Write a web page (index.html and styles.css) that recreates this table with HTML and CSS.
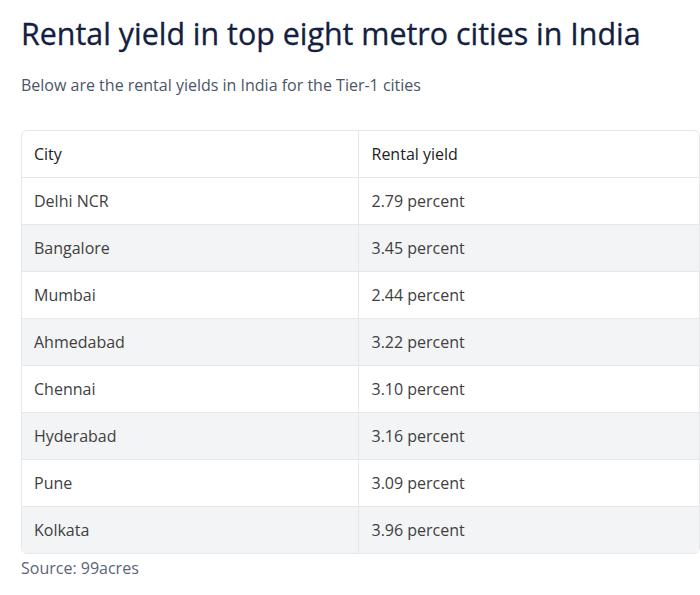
FILE: index.html
```html
<!DOCTYPE html>
<html>
<head>
<meta charset="utf-8">
<link rel="stylesheet" href="styles.css">
</head>
<body>
<main class="page">
  <h1 class="title">Rental yield in top eight metro cities in India</h1>
  <p class="lead">Below are the rental yields in India for the Tier-1 cities</p>
  <div class="table-wrap">
    <table class="yield-table">
      <thead>
        <tr><th>City</th><th>Rental yield</th></tr>
      </thead>
      <tbody>
        <tr><td>Delhi NCR</td><td>2.79 percent</td></tr>
        <tr><td>Bangalore</td><td>3.45 percent</td></tr>
        <tr><td>Mumbai</td><td>2.44 percent</td></tr>
        <tr><td>Ahmedabad</td><td>3.22 percent</td></tr>
        <tr><td>Chennai</td><td>3.10 percent</td></tr>
        <tr><td>Hyderabad</td><td>3.16 percent</td></tr>
        <tr><td>Pune</td><td>3.09 percent</td></tr>
        <tr><td>Kolkata</td><td>3.96 percent</td></tr>
      </tbody>
    </table>
  </div>
  <p class="source">Source: 99acres</p>
</main>
</body>
</html>
```

FILE: styles.css
```css
html, body {
  margin: 0;
  padding: 0;
  background: #ffffff;
}
body {
  font-family: "Open Sans", "Liberation Sans", sans-serif;
  overflow: hidden;
}
.page {
  padding: 14px 0 0 21px;
}
.title {
  margin: 0;
  font-size: 30.4px;
  font-weight: 500;
  line-height: 40px;
  color: #13203f;
  -webkit-text-stroke: 0.3px #13203f;
}
.lead {
  margin: 20px 0 0;
  font-size: 16px;
  line-height: 22px;
  color: #4b5568;
}
.table-wrap {
  margin-top: 34px;
  width: 677px;
  border: 1px solid #e5e7eb;
  border-radius: 6px;
  overflow: hidden;
}
.yield-table {
  width: 100%;
  border-collapse: collapse;
  font-size: 16px;
  color: #404040;
}
.yield-table th,
.yield-table td {
  height: 47px;
  padding: 0 12px;
  text-align: left;
  vertical-align: middle;
  line-height: 22px;
  box-sizing: border-box;
}
.yield-table th {
  height: 46px;
  font-weight: 500;
  color: #222222;
}
.yield-table th:first-child,
.yield-table td:first-child {
  width: 336px;
  border-right: 1px solid #e5e7eb;
}
.yield-table th:last-child,
.yield-table td:last-child {
  padding-left: 13px;
}
.yield-table tbody tr td {
  border-top: 1px solid #e5e7eb;
}
.yield-table tbody tr:nth-child(even) {
  background: #f3f4f6;
}
.source {
  margin: 3px 0 0;
  font-size: 16px;
  line-height: 22px;
  color: #5a6478;
}
```
